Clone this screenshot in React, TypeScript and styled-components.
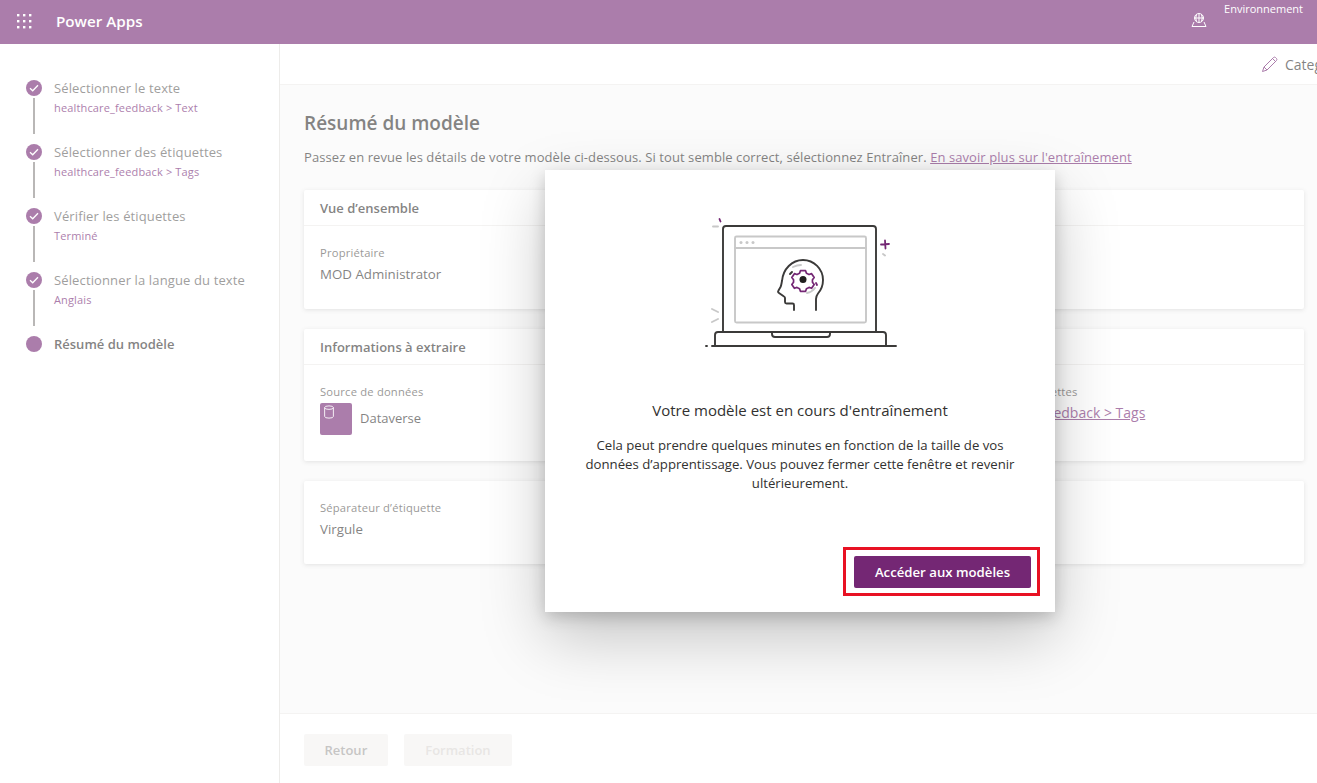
import { useState } from 'react';
import styled, { createGlobalStyle } from 'styled-components';

const GlobalStyle = createGlobalStyle`
  html, body {
    margin: 0;
    height: 100%;
    overflow: hidden;
  }
  body {
    font-family: "Open Sans", "Noto Sans", sans-serif;
    color: #323130;
    background: #fff;
  }
  #root {
    height: 100%;
  }
`;

const Page = styled.div`
  position: relative;
  display: flex;
  flex-direction: column;
  height: 783px;
  overflow: hidden;
`;

const Header = styled.header`
  display: flex;
  align-items: center;
  flex: none;
  height: 44px;
  background: #742774;
  color: #fff;
`;

const Waffle = styled.svg`
  width: 16px;
  height: 16px;
  margin: 0 0 2px 16px;
  fill: #fff;
`;

const Brand = styled.div`
  margin: 0 0 3px 24px;
  font-size: 15.2px;
  font-weight: 600;
`;

const EnvArea = styled.div`
  display: flex;
  align-items: flex-start;
  align-self: stretch;
  margin-left: auto;
  padding-right: 14px;
`;

const EnvIcon = styled.svg`
  width: 16px;
  height: 16px;
  margin: 12px 17px 0 0;
  fill: none;
  stroke: #fff;
`;

const EnvLabel = styled.div`
  margin-top: 1px;
  font-size: 11px;
  line-height: 16px;
`;

const Body = styled.div`
  display: flex;
  flex: 1;
  min-height: 0;
`;

const Sidebar = styled.nav`
  flex: none;
  box-sizing: border-box;
  width: 280px;
  padding-top: 34px;
  border-right: 1px solid #e1dfdd;
`;

const Step = styled.div`
  display: flex;
  height: 64px;
  padding-left: 26px;
`;

const Rail = styled.div`
  display: flex;
  flex-direction: column;
  align-items: center;
  width: 16px;
  margin-right: 12px;
`;

const Dot = styled.div`
  display: flex;
  align-items: center;
  justify-content: center;
  flex: none;
  width: 16px;
  height: 16px;
  margin-top: 2px;
  border-radius: 50%;
  background: #742774;
`;

const Line = styled.div`
  width: 2px;
  height: 36px;
  margin-top: 2px;
  background: #8a8886;
`;

const StepTitle = styled.div<{ $active?: boolean }>`
  font-size: 13px;
  line-height: 20px;
  letter-spacing: ${(p) => (p.$active ? '0' : '0.13px')};
  font-weight: ${(p) => (p.$active ? 600 : 400)};
  color: ${(p) => (p.$active ? '#323130' : '#605e5c')};
`;

const StepSub = styled.div`
  margin-top: 2px;
  font-size: 11px;
  line-height: 16px;
  letter-spacing: 0.15px;
  color: #742774;
`;

const Main = styled.main`
  display: flex;
  flex-direction: column;
  flex: 1;
  min-width: 0;
`;

const CommandBar = styled.div`
  display: flex;
  align-items: center;
  justify-content: flex-end;
  flex: none;
  height: 40px;
  border-bottom: 1px solid #edebe9;
  font-size: 14px;
  color: #323130;
`;

const CommandIcon = styled.svg`
  width: 17px;
  height: 17px;
  margin-right: 7px;
  fill: none;
  stroke: #742774;
`;

const CommandLabel = styled.span`
  margin-right: -5px;
`;

const Content = styled.div`
  flex: 1;
  min-height: 0;
  padding: 24px 13px 0 24px;
  background: #f8f8f8;
`;

const Title = styled.h1`
  margin: 0;
  font-size: 19px;
  line-height: 28px;
  font-weight: 600;
`;

const Intro = styled.p`
  margin: 10px 0 23px;
  font-size: 13px;
  line-height: 20px;
  letter-spacing: 0.08px;
`;

const TextLink = styled.a`
  color: #742774;
  text-decoration: underline;
`;

const Card = styled.section`
  margin-bottom: 20px;
  border-radius: 2px;
  background: #fff;
  box-shadow: 0 1px 4px rgba(0, 0, 0, 0.16);
`;

const CardHead = styled.h2`
  margin: 0;
  padding: 0 16px;
  height: 35px;
  border-bottom: 1px solid #edebe9;
  font-size: 13px;
  line-height: 37px;
  font-weight: 600;
`;

const CardGrid = styled.div<{ $height: number }>`
  display: grid;
  grid-template-columns: repeat(3, 1fr);
  height: ${(p) => p.$height}px;
  box-sizing: border-box;
  padding: 19px 16px 0;
`;

const Field = styled.div<{ $col?: number }>`
  grid-column: ${(p) => p.$col ?? 1};
`;

const FieldLabel = styled.div`
  font-size: 11.2px;
  line-height: 16px;
  letter-spacing: 0.2px;
  font-weight: 500;
  color: #565452;
`;

const FieldValue = styled.div`
  margin-top: 3px;
  font-size: 13.3px;
  line-height: 20px;
  color: #323130;
`;

const LinkValue = styled(FieldValue)`
  font-size: 14px;
`;

const SourceRow = styled.div`
  display: flex;
  align-items: center;
  gap: 8px;
  margin-top: 3px;
  font-size: 13px;
`;

const SourceTile = styled.div`
  width: 32px;
  height: 32px;
  border-radius: 2px;
  background: #742774;
`;

const SourceIcon = styled.svg`
  display: block;
  width: 12px;
  height: 14px;
  margin: 2px 0 0 3px;
  fill: none;
  stroke: #fff;
`;

const SourceName = styled.span`
  margin-bottom: 2px;
`;

const Footer = styled.footer`
  display: flex;
  gap: 16px;
  flex: none;
  height: 70px;
  box-sizing: border-box;
  padding: 20px 24px 0;
  border-top: 1px solid #edebe9;
`;

const FooterButton = styled.button<{ $faint?: boolean }>`
  height: 32px;
  padding: 0 ${(p) => (p.$faint ? '21.500px' : '20.500px')};
  border: 0;
  border-radius: 2px;
  background: #f3f2f1;
  font-family: inherit;
  font-size: 13px;
  font-weight: 600;
  color: ${(p) => (p.$faint ? '#d9d5d2' : '#a19f9d')};
`;

const Overlay = styled.div`
  position: absolute;
  inset: 0;
  display: flex;
  align-items: center;
  justify-content: center;
  padding: 0 0 1px 283px;
  background: rgba(255, 255, 255, 0.4);
`;

const Modal = styled.div`
  display: flex;
  flex-direction: column;
  align-items: center;
  box-sizing: border-box;
  width: 510px;
  height: 442px;
  padding-top: 35px;
  background: #fff;
  box-shadow: 0 25px 60px rgba(0, 0, 0, 0.22), 0 5px 15px rgba(0, 0, 0, 0.18);
`;

const Illustration = styled.svg`
  flex: none;
  width: 220px;
  height: 155px;
`;

const ModalTitle = styled.div`
  margin-top: 40px;
  font-size: 15px;
  line-height: 20px;
`;

const ModalText = styled.p`
  width: 445px;
  margin: 16px 0 0;
  font-size: 13.2px;
  line-height: 19px;
  text-align: center;
`;

const ActionRow = styled.div`
  align-self: flex-end;
  margin: auto 15px 16px 0;
`;

const Highlight = styled.div`
  display: flex;
  padding: 6px 6px 5px 8px;
  border: 3px solid #e81123;
`;

const PrimaryButton = styled.button`
  width: 177px;
  height: 32px;
  border: 0;
  border-radius: 2px;
  background: #742774;
  color: #fff;
  font-family: inherit;
  font-size: 13.2px;
  font-weight: 600;
`;

const steps = [
  { title: 'Sélectionner le texte', sub: 'healthcare_feedback > Text' },
  { title: 'Sélectionner des étiquettes', sub: 'healthcare_feedback > Tags' },
  { title: 'Vérifier les étiquettes', sub: 'Terminé' },
  { title: 'Sélectionner la langue du texte', sub: 'Anglais' },
];

function CheckIcon() {
  return (
    <svg width="10" height="8" viewBox="0 0 10 8" fill="none" stroke="#fff" strokeWidth="1.3">
      <path d="M1 4.2 3.7 6.8 9 1.2" />
    </svg>
  );
}

function LaptopArt() {
  return (
    <Illustration viewBox="0 0 220 155">
      <g fill="none" strokeLinecap="round" strokeLinejoin="round">
        <g stroke="#c8c8c8" strokeWidth="1.9">
          <rect x="45" y="31.5" width="131" height="86" rx="1.5" />
          <path d="M45 43h131M23 21.5h5M22 104l6 3M22 117l6-3M193 49l2 1.5" />
          <path d="M103 62q4-2 8-2M117 88q5-1 8-5" />
        </g>
        <g stroke="#3b3a39" strokeWidth="1.9">
          <path d="M33 127V24q0-3 3-3h147q3 0 3 3v103" />
          <path d="M25 141v-11q0-3 3-3h165q3 0 3 3v11" />
          <path d="M82 127v2q0 3 3 3h52q3 0 3-3v-2" />
          <path d="M16 141h1M22 141h184" />
          <path d="M104 105v-5q0-1.500-1.500-1.500h-6q-1.500 0-1.500-1.500v-4q0-1-1-1.500l-5-3.500q-1.500-1-.5-2.500l2-3.500c1-2 1-4 1.500-6C93 64 102 55 113 55c11 0 20 9 20 20 0 6-2 10-5 13.500-1.500 2-2 3.500-2 5.500v11" />
          <path d="M100 69l2-2" />
        </g>
        <path
          stroke="#742774"
          strokeWidth="2"
          transform="translate(113 74.700) scale(.86) translate(-113 -74.500)"
          d="M110 64h6l1 3 3 1.500 3-1 3 4.500-2 2.500v3l2 2.500-3 4.500-3-1-3 1.500-1 3h-6l-1-3-3-1.500-3 1-3-4.500 2-2.500v-3l-2-2.500 3-4.500 3 1 3-1.500z"
        />
        <path stroke="#742774" strokeWidth="1.8" d="M126 78l1 2M29.500 14l1 2.500M195 35.500l.5 8M191 39.500l8-.5" />
      </g>
      <circle cx="113" cy="74.500" r="3.500" fill="#201f1e" />
      <g fill="#c8c8c8">
        <circle cx="51" cy="37.500" r="1.500" />
        <circle cx="57" cy="37.500" r="1.500" />
        <circle cx="63" cy="37.500" r="1.500" />
      </g>
    </Illustration>
  );
}

export default function App() {
  const [closed] = useState(false);

  return (
    <>
      <GlobalStyle />
      <Page>
        <Header>
          <Waffle viewBox="0 0 16 16">
            {[1, 7, 13].flatMap((y) =>
              [1, 7, 13].map((x) => <rect key={`${x}-${y}`} x={x} y={y} width="2.400" height="2.400" />),
            )}
          </Waffle>
          <Brand>Power Apps</Brand>
          <EnvArea>
            <EnvIcon viewBox="0 0 16 16">
              <circle cx="8" cy="6" r="4.500" />
              <path d="M3.500 6h9M8 1.500v9M5.500 2.500q-1.500 3.500 0 7M10.500 2.500q1.500 3.500 0 7M3 10 1 14.500h14L13 10" />
            </EnvIcon>
            <EnvLabel>Environnement</EnvLabel>
          </EnvArea>
        </Header>
        <Body>
          <Sidebar>
            {steps.map((step) => (
              <Step key={step.title}>
                <Rail>
                  <Dot>
                    <CheckIcon />
                  </Dot>
                  <Line />
                </Rail>
                <div>
                  <StepTitle>{step.title}</StepTitle>
                  <StepSub>{step.sub}</StepSub>
                </div>
              </Step>
            ))}
            <Step>
              <Rail>
                <Dot />
              </Rail>
              <StepTitle $active>Résumé du modèle</StepTitle>
            </Step>
          </Sidebar>
          <Main>
            <CommandBar>
              <CommandIcon viewBox="0 0 17 17">
                <path d="M1.500 15.500 3 11 12.500 1.500q1-.8 2 0l1 1q.8 1 0 2L6 14z M3 11l3 3M11.500 2.500l3 3" />
              </CommandIcon>
              <CommandLabel>Categ</CommandLabel>
            </CommandBar>
            <Content>
              <Title>Résumé du modèle</Title>
              <Intro>
                Passez en revue les détails de votre modèle ci-dessous. Si tout semble correct, sélectionnez Entraîner.{' '}
                <TextLink>En savoir plus sur l'entraînement</TextLink>
              </Intro>
              <Card>
                <CardHead>Vue d’ensemble</CardHead>
                <CardGrid $height={83}>
                  <Field>
                    <FieldLabel>Propriétaire</FieldLabel>
                    <FieldValue>MOD Administrator</FieldValue>
                  </Field>
                </CardGrid>
              </Card>
              <Card>
                <CardHead>Informations à extraire</CardHead>
                <CardGrid $height={96}>
                  <Field>
                    <FieldLabel>Source de données</FieldLabel>
                    <SourceRow>
                      <SourceTile>
                        <SourceIcon viewBox="0 0 12 16">
                          <ellipse cx="6" cy="3" rx="5" ry="2" />
                          <path d="M1 3v10q0 2 5 2t5-2V3" />
                        </SourceIcon>
                      </SourceTile>
                      <SourceName>Dataverse</SourceName>
                    </SourceRow>
                  </Field>
                  <Field $col={3}>
                    <FieldLabel>Colonne d'étiquettes</FieldLabel>
                    <LinkValue>
                      <TextLink>healthcare_feedback &gt; Tags</TextLink>
                    </LinkValue>
                  </Field>
                </CardGrid>
              </Card>
              <Card>
                <CardGrid $height={83}>
                  <Field>
                    <FieldLabel>Séparateur d’étiquette</FieldLabel>
                    <FieldValue>Virgule</FieldValue>
                  </Field>
                </CardGrid>
              </Card>
            </Content>
            <Footer>
              <FooterButton>Retour</FooterButton>
              <FooterButton $faint>Formation</FooterButton>
            </Footer>
          </Main>
        </Body>
        {!closed && (
          <Overlay>
            <Modal>
              <LaptopArt />
              <ModalTitle>Votre modèle est en cours d'entraînement</ModalTitle>
              <ModalText>
                Cela peut prendre quelques minutes en fonction de la taille de vos données d’apprentissage. Vous pouvez
                fermer cette fenêtre et revenir ultérieurement.
              </ModalText>
              <ActionRow>
                <Highlight>
                  <PrimaryButton>Accéder aux modèles</PrimaryButton>
                </Highlight>
              </ActionRow>
            </Modal>
          </Overlay>
        )}
      </Page>
    </>
  );
}
